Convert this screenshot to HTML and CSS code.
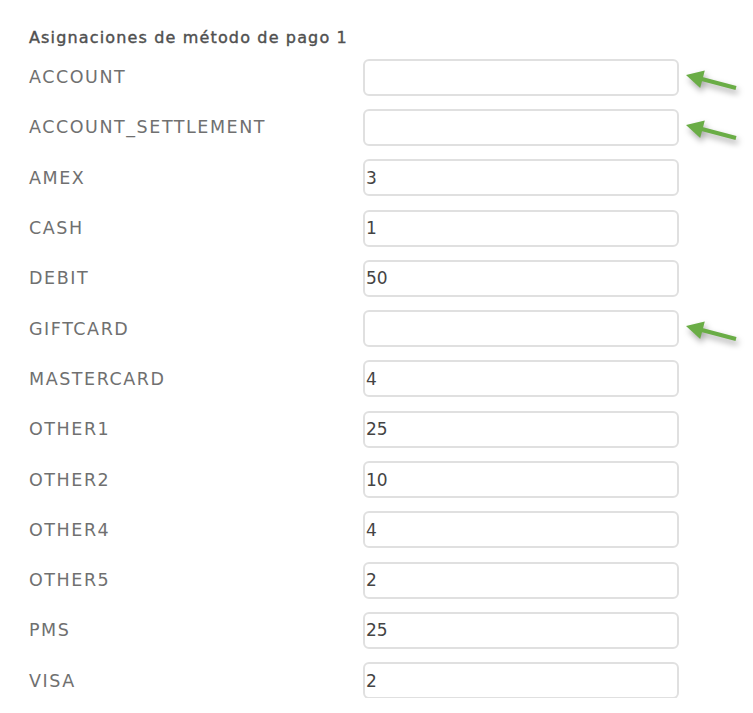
FILE: index.html
```html
<!DOCTYPE html>
<html lang="es">
<head>
    <meta charset="UTF-8">
    <meta name="viewport" content="width=device-width, initial-scale=1.0">
    <title>Asignaciones de método de pago</title>
    <link rel="stylesheet" href="styles.css">
</head>
<body>

    <div class="panel">
        <h2>Asignaciones de método de pago 1</h2>

        <div class="mapping">
            <div class="row">
                <label>ACCOUNT</label>
                <input type="text" value="">
                <svg class="arrow" width="60" height="30" viewBox="0 0 60 30"><line x1="15" y1="13" x2="53" y2="23" /><polygon points="3,10 21.8,5.6 17.2,23" /></svg>
            </div>
            <div class="row">
                <label>ACCOUNT_SETTLEMENT</label>
                <input type="text" value="">
                <svg class="arrow" width="60" height="30" viewBox="0 0 60 30"><line x1="15" y1="13" x2="53" y2="23" /><polygon points="3,10 21.8,5.6 17.2,23" /></svg>
            </div>
            <div class="row">
                <label>AMEX</label>
                <input type="text" value="3">
            </div>
            <div class="row">
                <label>CASH</label>
                <input type="text" value="1">
            </div>
            <div class="row">
                <label>DEBIT</label>
                <input type="text" value="50">
            </div>
            <div class="row">
                <label>GIFTCARD</label>
                <input type="text" value="">
                <svg class="arrow" width="60" height="30" viewBox="0 0 60 30"><line x1="15" y1="13" x2="53" y2="23" /><polygon points="3,10 21.8,5.6 17.2,23" /></svg>
            </div>
            <div class="row">
                <label>MASTERCARD</label>
                <input type="text" value="4">
            </div>
            <div class="row">
                <label>OTHER1</label>
                <input type="text" value="25">
            </div>
            <div class="row">
                <label>OTHER2</label>
                <input type="text" value="10">
            </div>
            <div class="row">
                <label>OTHER4</label>
                <input type="text" value="4">
            </div>
            <div class="row">
                <label>OTHER5</label>
                <input type="text" value="2">
            </div>
            <div class="row">
                <label>PMS</label>
                <input type="text" value="25">
            </div>
            <div class="row">
                <label>VISA</label>
                <input type="text" value="2">
            </div>
        </div>
    </div>

</body>
</html>
```

FILE: styles.css
```css
body {
    font-family: "DejaVu Sans", Arial, sans-serif;
    background-color: #fff;
    margin: 0;
}
.panel {
    height: 698px;
    overflow: hidden;
    padding: 26px 0 0 29px;
    box-sizing: border-box;
}
h2 {
    margin: 0;
    font-size: 16px;
    font-weight: normal;
    letter-spacing: 1.15px;
    color: #505050;
    line-height: 24px;
    -webkit-text-stroke: 0.4px #505050;
}
.mapping {
    margin-top: 2px;
}
.row {
    position: relative;
    display: grid;
    grid-template-columns: 334px 316px;
    align-items: center;
    height: 50.3px;
}
.row label {
    font-size: 17.5px;
    letter-spacing: 1.55px;
    color: #707070;
}
.row input {
    box-sizing: border-box;
    height: 37px;
    width: 316px;
    margin: 0;
    padding: 0 1px;
    border: 2px solid #e0e0e0;
    border-radius: 6px;
    font-family: "DejaVu Sans", Arial, sans-serif;
    font-size: 17px;
    color: #444;
    background: #fff;
    outline: none;
}
.arrow {
    position: absolute;
    left: 654px;
    top: 13px;
    overflow: visible;
    filter: drop-shadow(2px 4px 3px rgba(0, 0, 0, 0.35));
}
.arrow line {
    stroke: #6aad46;
    stroke-width: 4;
}
.arrow polygon {
    fill: #6aad46;
}
```
